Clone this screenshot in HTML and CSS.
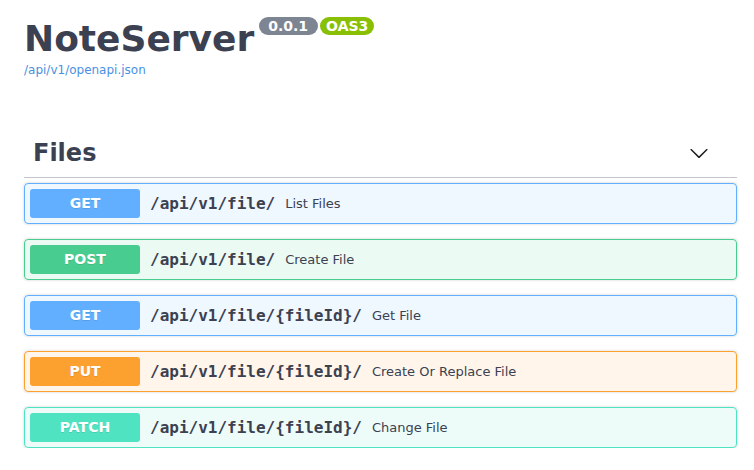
FILE: index.html
```html
<!DOCTYPE html>
<html>
<head>
<meta charset="utf-8">
<link rel="stylesheet" href="styles.css">
</head>
<body>
<div class="wrap">
  <div class="info">
    <div class="title-row">
      <h2 class="title">NoteServer</h2>
      <span class="badge version">0.0.1</span>
      <span class="badge oas">OAS3</span>
    </div>
    <a class="spec-link" href="#">/api/v1/openapi.json</a>
  </div>

  <div class="tag">
    <h3 class="tag-name">Files</h3>
    <svg class="chevron" width="20" height="20" viewBox="0 0 20 20"><path d="M17.418 6.109c.272-.268.709-.268.979 0s.271.701 0 .969l-7.908 7.83c-.27.268-.707.268-.979 0l-7.908-7.83c-.27-.268-.27-.701 0-.969.271-.268.709-.268.979 0L10 13.25l7.418-7.141z" fill="#1b1b1b"/></svg>
  </div>

  <div class="ops">
    <div class="op op-get">
      <span class="method">GET</span>
      <span class="path">/api/v1/file/</span>
      <span class="summary">List Files</span>
    </div>
    <div class="op op-post">
      <span class="method">POST</span>
      <span class="path">/api/v1/file/</span>
      <span class="summary">Create File</span>
    </div>
    <div class="op op-get">
      <span class="method">GET</span>
      <span class="path">/api/v1/file/{fileId}/</span>
      <span class="summary">Get File</span>
    </div>
    <div class="op op-put">
      <span class="method">PUT</span>
      <span class="path">/api/v1/file/{fileId}/</span>
      <span class="summary">Create Or Replace File</span>
    </div>
    <div class="op op-patch">
      <span class="method">PATCH</span>
      <span class="path">/api/v1/file/{fileId}/</span>
      <span class="summary">Change File</span>
    </div>
  </div>
</div>
</body>
</html>
```

FILE: styles.css
```css
* { box-sizing: border-box; }
html, body { margin: 0; padding: 0; background: #fff; }
body {
  font-family: "DejaVu Sans", sans-serif;
  color: #3b4151;
}
.wrap {
  padding: 18px 17px 0 24px;
}
.info { display: flex; flex-direction: column; align-items: flex-start; }
.title-row { display: flex; align-items: flex-start; }
.title {
  margin: 0;
  font-size: 36px;
  line-height: 42px;
  font-weight: bold;
  color: #3b4151;
}
.badge {
  display: inline-block;
  height: 18px;
  line-height: 18px;
  font-size: 14px;
  font-weight: bold;
  color: #fff;
  border-radius: 57px;
  margin-top: -1px;
}
.version {
  background: #7d8492;
  margin-left: 5px;
  padding: 0 10px 0 9px;
}
.oas {
  background: #89bf04;
  margin-left: 2px;
  padding: 0 6px;
}
.spec-link {
  margin-top: 3px;
  font-size: 12px;
  line-height: 14px;
  color: #4990e2;
  text-decoration: none;
}
.tag {
  margin-top: 52px;
  display: flex;
  align-items: center;
  justify-content: space-between;
  padding: 10px 28px 10px 9px;
  border-bottom: 1px solid rgba(59, 65, 81, 0.3);
  margin-bottom: 5px;
}
.tag-name {
  margin: 0;
  font-size: 24px;
  line-height: 28px;
  font-weight: bold;
}
.chevron { display: block; }
.ops { display: flex; flex-direction: column; gap: 15px; }
.op {
  display: flex;
  align-items: flex-start;
  height: 41px;
  padding: 5px;
  border: 1px solid;
  border-radius: 4px;
  box-shadow: 0 0 3px rgba(0, 0, 0, 0.19);
}
.method {
  width: 110px;
  height: 29px;
  line-height: 29px;
  text-align: center;
  border-radius: 3px;
  color: #fff;
  font-size: 14px;
  font-weight: bold;
  text-shadow: 0 1px 0 rgba(0,0,0,.1);
}
.path {
  padding: 0 10px;
  font-family: "DejaVu Sans Mono", monospace;
  font-weight: bold;
  font-size: 16px;
  line-height: 29px;
  color: #3b4151;
}
.summary {
  font-size: 13px;
  line-height: 29px;
  color: #3b4151;
}
.op-get { border-color: #61affe; background: rgba(97, 175, 254, 0.1); }
.op-get .method { background: #61affe; }
.op-post { border-color: #49cc90; background: rgba(73, 204, 144, 0.1); }
.op-post .method { background: #49cc90; }
.op-put { border-color: #fca130; background: rgba(252, 161, 48, 0.1); }
.op-put .method { background: #fca130; }
.op-patch { border-color: #50e3c2; background: rgba(80, 227, 194, 0.1); }
.op-patch .method { background: #50e3c2; }
```
